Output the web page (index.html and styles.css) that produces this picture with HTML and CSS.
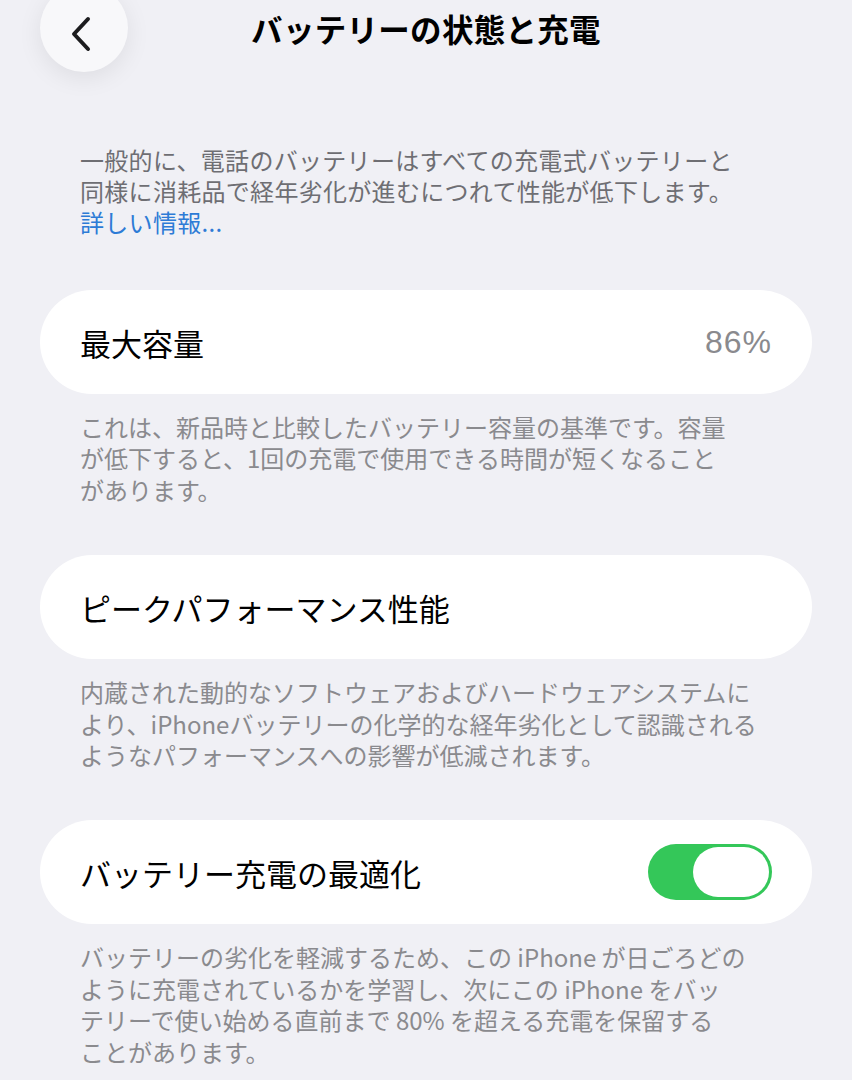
FILE: index.html
```html
<!DOCTYPE html>
<html lang="ja">
<head>
    <meta charset="UTF-8">
    <meta name="viewport" content="width=device-width, initial-scale=1.0">
    <title>バッテリーの状態と充電</title>
    <link rel="stylesheet" href="styles.css">
</head>
<body>
    <div class="page">
        <div class="header">
            <button class="back">
                <svg width="26" height="36" viewBox="0 0 26 36">
                    <path d="M19 3 L5 18 L19 33" fill="none" stroke="#1c1c1e" stroke-width="4" stroke-linecap="round" stroke-linejoin="round"/>
                </svg>
            </button>
            <h1>バッテリーの状態と充電</h1>
            <div></div>
        </div>

        <p class="intro">一般的に、電話のバッテリーはすべての充電式バッテリーと<br>同様に消耗品で経年劣化が進むにつれて性能が低下します。<br><a href="#">詳しい情報...</a></p>

        <div class="card">
            <span class="label">最大容量</span>
            <span class="value">86%</span>
        </div>
        <p class="note">これは、新品時と比較したバッテリー容量の基準です。容量<br>が低下すると、1回の充電で使用できる時間が短くなること<br>があります。</p>

        <div class="card">
            <span class="label">ピークパフォーマンス性能</span>
        </div>
        <p class="note">内蔵された動的なソフトウェアおよびハードウェアシステムに<br>より、iPhoneバッテリーの化学的な経年劣化として認識される<br>ようなパフォーマンスへの影響が低減されます。</p>

        <div class="card">
            <span class="label">バッテリー充電の最適化</span>
            <span class="toggle on"><span class="knob"></span></span>
        </div>
        <p class="note">バッテリーの劣化を軽減するため、この iPhone が日ごろどの<br>ように充電されているかを学習し、次にこの iPhone をバッ<br>テリーで使い始める直前まで 80% を超える充電を保留する<br>ことがあります。</p>
    </div>
</body>
</html>
```

FILE: styles.css
```css
body {
    margin: 0;
    padding: 0;
    background-color: #f0f0f5;
    font-family: "Noto Sans CJK JP", "Noto Sans", sans-serif;
    color: #000000;
    overflow: hidden;
}
.page {
    padding: 0 40px;
}
.header {
    display: grid;
    grid-template-columns: 88px 1fr 88px;
    align-items: center;
    height: 88px;
    margin-top: -16px;
}
.back {
    width: 88px;
    height: 88px;
    border-radius: 50%;
    border: none;
    background-color: #f8f8fa;
    box-shadow: 0 6px 24px rgba(0, 0, 0, 0.08);
    display: flex;
    align-items: center;
    justify-content: center;
    padding: 0 4px 0 0;
}
.back svg {
    margin-top: 12px;
}
.header h1 {
    margin: 0;
    padding-top: 0;
    text-align: center;
    font-size: 31.5px;
    font-weight: bold;
    letter-spacing: 0.3px;
}
.intro {
    margin: 72px 0 0 0;
    padding: 0 40px;
    font-size: 24px;
    line-height: 31px;
    letter-spacing: 0.3px;
    color: #6e6e73;
    white-space: nowrap;
}
.intro a {
    color: #2d7bd6;
    text-decoration: none;
}
.card {
    display: flex;
    align-items: center;
    justify-content: space-between;
    height: 104px;
    padding: 0 40px;
    background-color: #ffffff;
    border-radius: 52px;
    margin-top: 50px;
}
.intro + .card {
    margin-top: 53px;
}
.label {
    font-size: 31px;
}
.value {
    font-size: 32px;
    letter-spacing: 1px;
    color: #8a8a8e;
    font-family: "Liberation Sans", "Noto Sans CJK JP", sans-serif;
}
.note {
    margin: 17px 0 0 0;
    padding: 0 40px;
    font-size: 24px;
    line-height: 31.4px;
    color: #8a8a8e;
    white-space: nowrap;
}
.toggle {
    width: 124px;
    height: 56px;
    border-radius: 28px;
    background-color: #34c759;
    display: flex;
    align-items: center;
    justify-content: flex-end;
    padding: 0 3px;
    box-sizing: border-box;
}
.knob {
    width: 76px;
    height: 50px;
    border-radius: 25px;
    background-color: #ffffff;
}
```
